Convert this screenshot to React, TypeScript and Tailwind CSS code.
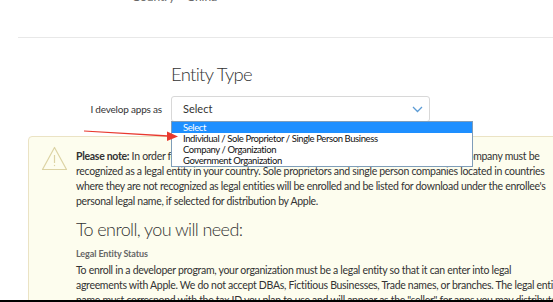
import React from 'react';

const options = [
  'Select',
  'Individual / Sole Proprietor / Single Person Business',
  'Company / Organization',
  'Government Organization',
];

function Chevron() {
  return (
    <svg width="11" height="7" viewBox="0 0 11 7" fill="none">
      <path d="M1 1l4.5 4.5L10 1" stroke="#5b9bd5" strokeWidth="1.3" />
    </svg>
  );
}

function Warning() {
  return (
    <svg className="shrink-0" width="27" height="25" viewBox="0 0 27 25" fill="none">
      <path d="M13.5 1.5L25.5 23.5H1.5Z" stroke="#dcd3a4" strokeWidth="1.2" strokeLinejoin="round" />
      <path d="M13.5 9v8" stroke="#dcd3a4" strokeWidth="1.2" />
      <circle cx="13.5" cy="19.5" r="0.7" fill="#dcd3a4" />
    </svg>
  );
}

function RedArrow() {
  return (
    <svg className="absolute left-[84px] top-[128px]" width="100" height="14" viewBox="0 0 100 14">
      <polygon points="0,2.5 84,7.2 84,8.8 0,3.5" fill="#e8392f" />
      <polygon points="83,3.5 94,8.5 83,13" fill="#e8392f" />
    </svg>
  );
}

export default function App() {
  return (
    <div className="relative w-[553px] h-[302px] overflow-hidden bg-white text-[#333] font-['Lato',sans-serif]">
      <div className="-mt-[10px] flex gap-[12px] pl-[132px] text-[12px] leading-[14px] text-[#666]">
        <span>Country</span>
        <span>China</span>
      </div>

      <div className="ml-[18px] mt-[33px] border-t border-[#e8e8e8]" />

      <h2 className="mt-[24px] pl-[171px] text-[18.5px] leading-[24px] font-light tracking-[-0.7px] text-[#333]">Entity Type</h2>

      <div className="mt-[10px] flex items-center">
        <label className="w-[162px] text-right text-[10px] tracking-[-0.2px]">I develop apps as</label>
        <div className="ml-[9px] flex h-[26px] w-[259px] items-center justify-between rounded-[3px] border border-[#d8d8d8] pl-[11px] pr-[6px] text-[11px]">
          <span>Select</span>
          <Chevron />
        </div>
      </div>

      <div className="mt-[14px] ml-[28px] w-[560px] rounded-[4px] border border-[#ebe3c4] bg-[#fdfdee] pl-[12px] pt-[9px] pb-[20px]">
        <div className="flex gap-[8px]">
          <Warning />
          <div className="pt-[3px] text-[10.5px] leading-[15px] tracking-[-0.3px] whitespace-nowrap">
            <div><b className="font-bold">Please note:</b> In order for your application to be accepted into the developer program, your company must be</div>
            <div>recognized as a legal entity in your country. Sole proprietors and single person companies located in countries</div>
            <div>where they are not recognized as legal entities will be enrolled and be listed for download under the enrollee's</div>
            <div>personal legal name, if selected for distribution by Apple.</div>

            <h3 className="mt-[8px] text-[18px] leading-[24px] font-light tracking-[-0.6px]">To enroll, you will need:</h3>
            <div className="mt-[7px] text-[9px] leading-[12px] font-bold tracking-[-0.1px] text-[#666]">Legal Entity Status</div>
            <div className="mt-[3px]">
              <div>To enroll in a developer program, your organization must be a legal entity so that it can enter into legal</div>
              <div>agreements with Apple. We do not accept DBAs, Fictitious Businesses, Trade names, or branches. The legal entity</div>
              <div>name must correspond with the tax ID you plan to use and will appear as the "seller" for apps you may distribute</div>
            </div>
          </div>
        </div>
      </div>

      <ul className="absolute left-[171px] top-[121px] w-[302px] border border-[#7f9db9] bg-white text-[9.5px] leading-[11px] tracking-[-0.4px]">
        {options.map((o, i) => (
          <li key={o} className={i === 0 ? 'bg-[#1e8fff] pl-[11px] text-white' : 'pl-[11px] text-[#111]'}>
            {o}
          </li>
        ))}
      </ul>

      <RedArrow />

      <div className="absolute bottom-0 left-0 h-[2px] w-full bg-black" />
    </div>
  );
}
